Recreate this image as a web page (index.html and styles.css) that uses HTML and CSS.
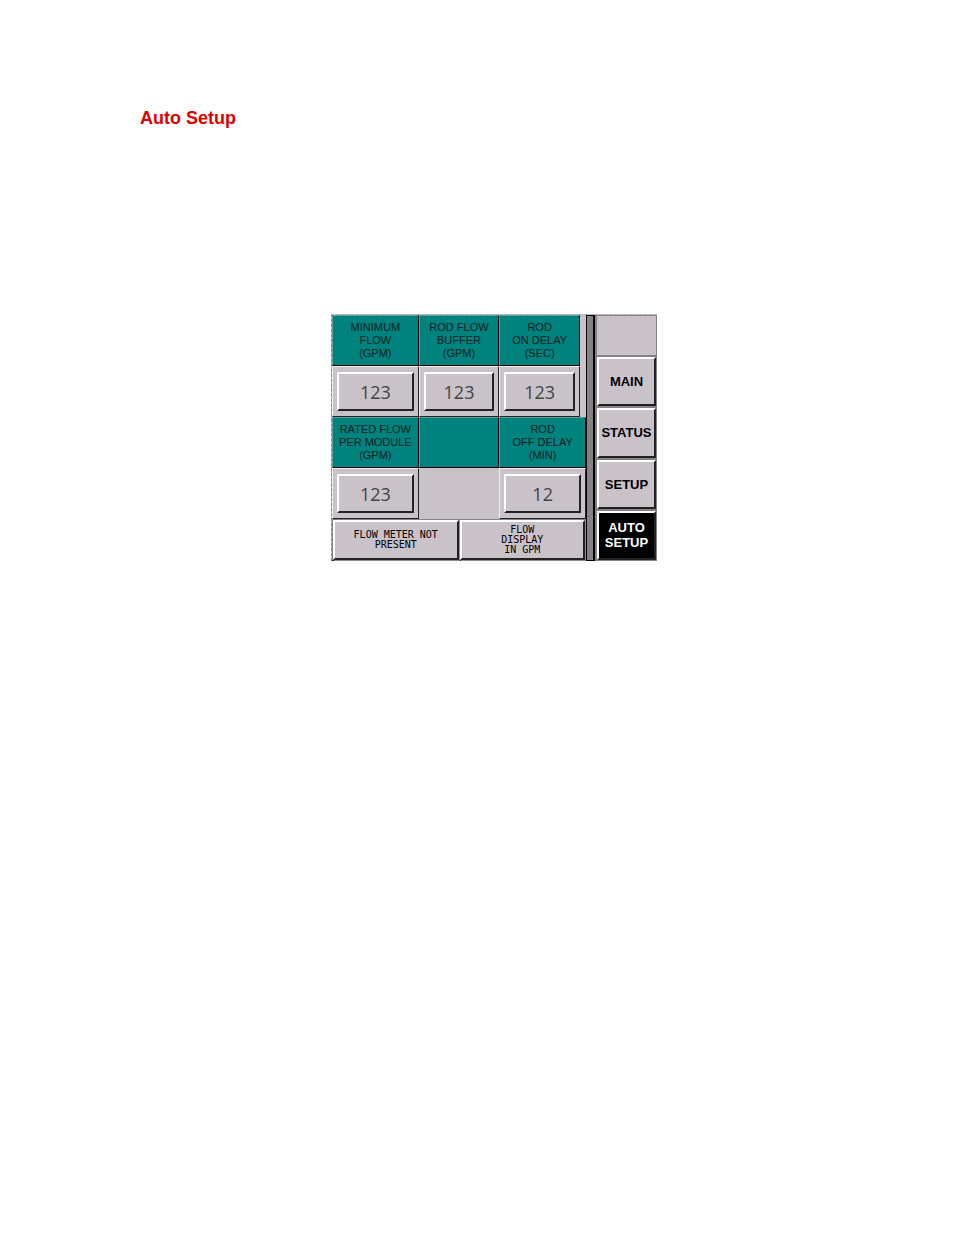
FILE: index.html
```html
<!DOCTYPE html>
<html lang="en">
<head>
  <meta charset="utf-8" />
  <meta name="viewport" content="width=device-width, initial-scale=1.0" />

  <title>Auto Setup</title>

  <link rel="stylesheet" href="styles.css">
</head>
<body>
  <main class="page">
    <h1 class="page-title">Auto Setup</h1>

    <div class="panel">
      <section class="settings">
        <form class="fields">
          <div class="field">
            <label class="field-label" for="min-flow">MINIMUM<br>FLOW<br>(GPM)</label>
            <div class="field-body"><input id="min-flow" class="field-input" type="text" value="123"></div>
          </div>
          <div class="field">
            <label class="field-label" for="rod-buffer">ROD FLOW<br>BUFFER<br>(GPM)</label>
            <div class="field-body"><input id="rod-buffer" class="field-input" type="text" value="123"></div>
          </div>
          <div class="field field-short">
            <label class="field-label" for="rod-on">ROD<br>ON DELAY<br>(SEC)</label>
            <div class="field-body"><input id="rod-on" class="field-input" type="text" value="123"></div>
          </div>
          <div class="field">
            <label class="field-label" for="rated-flow">RATED FLOW<br>PER MODULE<br>(GPM)</label>
            <div class="field-body"><input id="rated-flow" class="field-input" type="text" value="123"></div>
          </div>
          <div class="field">
            <div class="field-label"></div>
            <div class="field-body field-empty"></div>
          </div>
          <div class="field">
            <label class="field-label" for="rod-off">ROD<br>OFF DELAY<br>(MIN)</label>
            <div class="field-body"><input id="rod-off" class="field-input" type="text" value="12"></div>
          </div>
        </form>

        <div class="toggles">
          <button class="toggle" type="button">FLOW METER NOT<br>PRESENT</button>
          <button class="toggle" type="button">FLOW<br>DISPLAY<br>IN GPM</button>
        </div>
      </section>

      <div class="divider"></div>

      <nav class="nav">
        <div class="nav-blank"></div>
        <button class="nav-button" type="button">MAIN</button>
        <button class="nav-button" type="button">STATUS</button>
        <button class="nav-button" type="button">SETUP</button>
        <button class="nav-button active" type="button">AUTO<br>SETUP</button>
      </nav>
    </div>
  </main>
</body>
</html>
```

FILE: styles.css
```css
*, *::before, *::after {
  box-sizing: border-box;
}

body {
  margin: 0;
  background: white;
  font-family: "Liberation Sans", Arial, sans-serif;
}

button, input {
  margin: 0;
  border-radius: 0;
  color: black;
}

.page {
  padding: 104px 106px 104px 140px;
}

.page-title {
  margin: 0 0 182px;
  font-size: 18px;
  line-height: 28px;
  font-weight: 700;
  color: #e00000;
}

.panel {
  display: flex;
  width: 100%;
  max-width: 326px;
  margin: 0 auto;
  border-top: 1px dashed #b5b0b5;
  border-left: 1px dashed #8c888c;
  background: #cac2c9;
}

.settings {
  flex: 1;
  display: flex;
  flex-direction: column;
}

.fields {
  display: grid;
  grid-template-columns: 87fr 81fr 87fr;
}

.field-label {
  display: block;
  height: 51px;
  padding: 5px 0;
  border: 1px solid;
  border-color: #5f9d9c black black #5f9d9c;
  background: #00837f;
  color: #061c1c;
  font-size: 11px;
  line-height: 13px;
  text-align: center;
}

.field-body {
  display: flex;
  height: 51px;
  padding: 5px 4px;
  border: 1px solid;
  border-color: #f2ecf1 #222 #222 #f2ecf1;
}

.field-short {
  margin-right: 6px;
}

.field-empty {
  border-color: #cac2c9;
}

.field-input {
  width: 100%;
  min-width: 0;
  padding: 0;
  border: 2px solid;
  border-color: white #222 #222 white;
  background: #cac2c9;
  color: #444;
  font: 18px/24px "Open Sans", "Noto Sans", sans-serif;
  text-align: center;
}

.toggles {
  display: flex;
  gap: 1px;
  height: 42px;
  padding: 1px 1px 0;
  border-bottom: 1px solid #222;
  background: #858285;
}

.toggle {
  flex: 1;
  padding: 0;
  border: 2px solid;
  border-color: white #222 #222 white;
  box-shadow: 1px 1px #928d92;
  background: #cac2c9;
  font: 10px/10px "DejaVu Sans Mono", "Liberation Mono", monospace;
}

.divider {
  width: 9px;
  border: 1px solid black;
  border-width: 1px 2px 1px 1px;
  background: #858285;
}

.nav {
  width: 62px;
  display: flex;
  flex-direction: column;
  gap: 2px;
  padding: 1px 1px 1px 2px;
  background: #858285;
}

.nav-blank {
  height: 39px;
  background: #cac2c9;
}

.nav-button {
  flex: 1;
  padding: 0;
  border: 2px solid;
  border-color: white #222 #222 white;
  background: #cac2c9;
  font: bold 13px/15px "Liberation Sans", Arial, sans-serif;
}

.nav-button.active {
  background: black;
  color: white;
}
```
